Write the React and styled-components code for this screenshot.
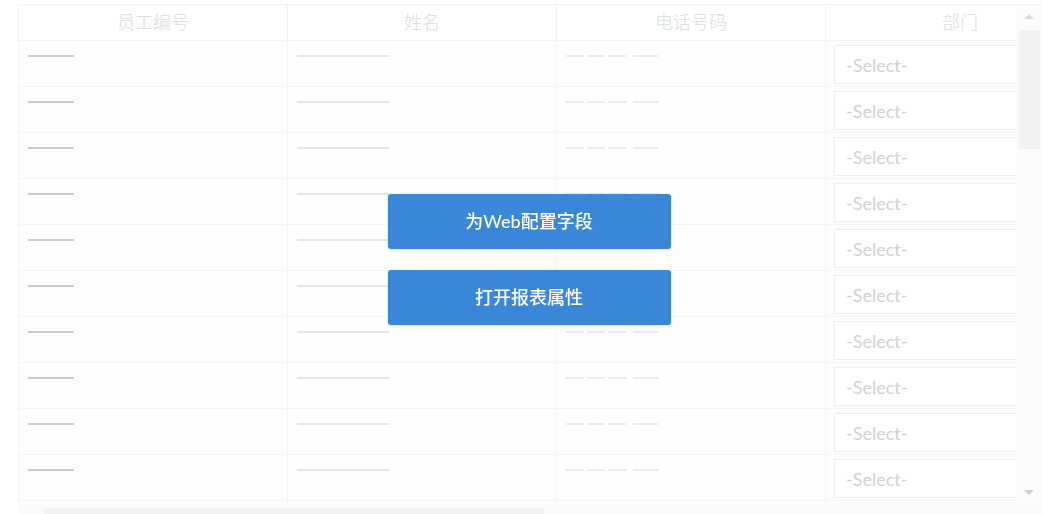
import React from "react";
import styled, { createGlobalStyle } from "styled-components";

const GlobalStyle = createGlobalStyle`
  html, body {
    margin: 0;
    padding: 0;
    background: #ffffff;
    overflow: hidden;
    font-family: "Lato", "Noto Sans CJK SC", sans-serif;
  }
`;

const Page = styled.div`
  height: 514px;
  padding: 4px 16px 0 18px;
  box-sizing: border-box;
  overflow: hidden;
`;

const Frame = styled.div`
  display: grid;
  grid-template-columns: 998px 26px;
  grid-template-rows: 500px 14px;
  border-top: 1px solid #f3f3f3;
`;

const Viewport = styled.div`
  overflow: hidden;
  background: #fdfdfd;
`;

const Table = styled.div`
  width: 1076px;
  display: grid;
  grid-template-columns: repeat(4, 269px);
`;

const HeadCell = styled.div`
  height: 36px;
  padding-bottom: 4px;
  box-sizing: border-box;
  border-left: 1px solid #f3f3f3;
  border-bottom: 1px solid #f3f3f3;
  background: #ffffff;
  display: flex;
  align-items: center;
  justify-content: center;
  font-family: "Noto Sans CJK SC", sans-serif;
  font-weight: 300;
  font-size: 18px;
  color: #dcdcdc;
`;

const Cell = styled.div`
  height: 46px;
  box-sizing: border-box;
  border-left: 1px solid #f4f4f4;
  border-bottom: 1px solid #f4f4f4;
  padding: ${(p) => (p.$select ? "4px 0 0 8px" : "14px 0 0 9px")};
  display: flex;
  align-items: flex-start;
  gap: 3px;
`;

const Line = styled.span`
  display: block;
  width: ${(p) => p.$w}px;
  height: 2px;
  margin-left: ${(p) => p.$ml || 0}px;
  background: ${(p) => p.$c};
`;

const Select = styled.div`
  width: 260px;
  height: 39px;
  box-sizing: border-box;
  border: 1px solid #eeeeee;
  background: #ffffff;
  padding-left: 11px;
  display: flex;
  align-items: center;
  font-family: "Lato", sans-serif;
  font-size: 18px;
  color: #d2d2d2;
`;

const VScroll = styled.div`
  background: #fbfbfb;
  display: flex;
  flex-direction: column;
  align-items: center;
  padding-top: 9px;
  box-sizing: border-box;
`;

const Arrow = styled.span`
  width: 0;
  height: 0;
  border-left: 5px solid transparent;
  border-right: 5px solid transparent;
  ${(p) =>
    p.$down
      ? "border-top: 5px solid #cfcfcf; margin-top: auto; margin-bottom: 10px;"
      : "border-bottom: 5px solid #dcdcdc;"}
`;

const VThumb = styled.div`
  width: 21px;
  height: 119px;
  margin-top: 11px;
  margin-left: 1px;
  background: #f1f1f1;
`;

const HScroll = styled.div`
  grid-column: 1 / 3;
  background: #fafafa;
  padding: 3px 0 0 26px;
`;

const HThumb = styled.div`
  width: 500px;
  height: 10px;
  background: #f1f1f1;
`;

const Overlay = styled.div`
  position: fixed;
  inset: 0;
  display: flex;
  flex-direction: column;
  align-items: center;
  justify-content: center;
  gap: 21px;
  padding-top: 5px;
  box-sizing: border-box;
`;

const ActionButton = styled.button`
  width: 283px;
  height: 55px;
  padding: 0 0 3px;
  border: none;
  border-radius: 3px;
  background: #3a87d9;
  color: #ffffff;
  font-family: "Lato", "Noto Sans CJK SC", sans-serif;
  font-size: 18px;
  font-weight: 500;
  box-shadow: 0 1px 3px rgba(0, 0, 0, 0.12);
  cursor: pointer;
`;

const headers = ["员工编号", "姓名", "电话号码", "部门"];
const rows = Array.from({ length: 11 }, (_, i) => i);

function Row({ last }) {
  return (
    <>
      <Cell>
        <Line $w={46} $c="#cbcbcb" />
      </Cell>
      <Cell>
        <Line $w={92} $c="#e4e4e4" />
      </Cell>
      <Cell>
        <Line $w={18} $c="#ebebeb" />
        <Line $w={18} $c="#ebebeb" />
        <Line $w={18} $c="#ebebeb" />
        <Line $w={25} $c="#ebebeb" $ml={4} />
      </Cell>
      <Cell $select>
        <Select>{last ? "" : "-Select-"}</Select>
      </Cell>
    </>
  );
}

export default function App() {
  return (
    <>
      <GlobalStyle />
      <Page>
        <Frame>
          <Viewport>
            <Table>
              {headers.map((h) => (
                <HeadCell key={h}>{h}</HeadCell>
              ))}
              {rows.map((r) => (
                <Row key={r} last={r === rows.length - 1} />
              ))}
            </Table>
          </Viewport>
          <VScroll>
            <Arrow />
            <VThumb />
            <Arrow $down />
          </VScroll>
          <HScroll>
            <HThumb />
          </HScroll>
        </Frame>
      </Page>
      <Overlay>
        <ActionButton>为Web配置字段</ActionButton>
        <ActionButton>打开报表属性</ActionButton>
      </Overlay>
    </>
  );
}
